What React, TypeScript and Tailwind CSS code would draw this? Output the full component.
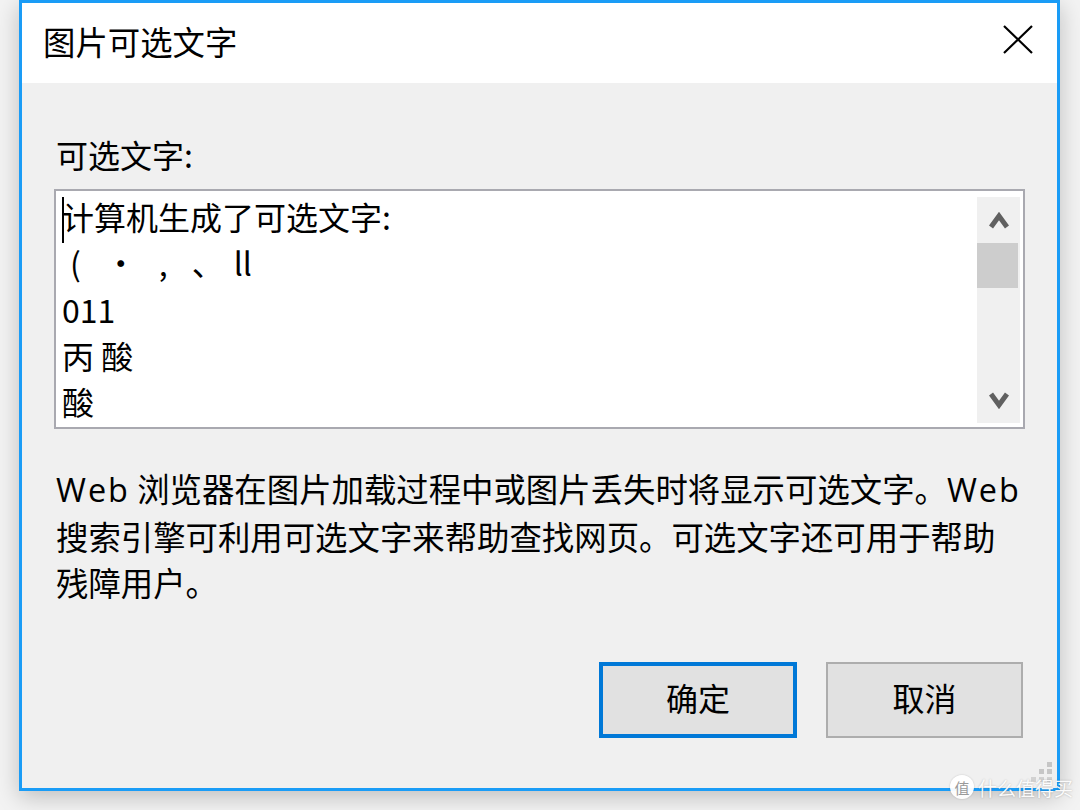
import React from "react";

const cjk = { fontFamily: '"Noto Sans CJK SC", "Noto Sans", sans-serif' };

const Chevron = ({ down }: { down?: boolean }) => (
  <svg width="20" height="17" viewBox="0 0 20 17" className={down ? "rotate-180" : ""}>
    <path d="M2 15 L10 4 L18 15" fill="none" stroke="#606060" strokeWidth="5" strokeLinejoin="miter" />
  </svg>
);

// latin words in the help text are wider in the original font
const Web = () => (
  <span className="tracking-[2px]" style={{ fontFamily: '"Open Sans", "Noto Sans CJK SC", sans-serif' }}>
    Web
  </span>
);

const AltTextDialog: React.FC = () => {
  return (
    <div
      className="relative w-[1080px] h-[810px] overflow-hidden bg-[#f3f3f3] pl-[19px] text-black"
      style={cjk}
    >
      <div className="w-[1041px] h-[791px] border-[3px] border-[#1a9cf6] bg-[#f0f0f0] shadow-[0_6px_22px_rgba(0,0,0,0.22)] flex flex-col">
        {/* title bar */}
        <div className="h-[80px] bg-white flex items-center justify-between pl-[21px] pr-[24px]">
          <span className="text-[32.4px] leading-[46px] -mt-[4px]">图片可选文字</span>
          <svg width="30" height="29" viewBox="0 0 30 29" className="-mt-[7px]">
            <path d="M1 1 L29 28 M29 1 L1 28" stroke="#000" strokeWidth="2.2" />
          </svg>
        </div>

        {/* body */}
        <div className="flex-1 px-[32px] pt-[48px]">
          <div className="text-[32px] leading-[46px] pl-[2px]">可选文字:</div>

          <div className="mt-[12px] h-[240px] border-2 border-[#a9a9b0] bg-white flex">
            <div className="relative flex-1 pl-[6px] pt-[2px] text-[32px] leading-[46.3px] whitespace-pre">
              <span className="absolute left-[6px] top-[6px] w-[2px] h-[46px] bg-black" />
              <div>计算机生成了可选文字:</div>
              <div>
                <span className="ml-[8px]">(</span>
                <span className="ml-[24px]">·</span>
                <span className="ml-[22px]">,</span>
                <span className="ml-[24px]">、</span>
                <span className="ml-[10px]">ll</span>
              </div>
              <div>011</div>
              <div>丙 酸</div>
              <div>酸</div>
            </div>
            <div className="w-[43px] mt-[6px] mb-[4px] mr-[3px] bg-[#f0f0f0] flex flex-col">
              <div className="h-[46px] flex items-center justify-center">
                <Chevron />
              </div>
              <div className="h-[45px] w-[41px] bg-[#cdcdcd]" />
              <div className="flex-1" />
              <div className="h-[46px] flex items-center justify-center">
                <Chevron down />
              </div>
            </div>
          </div>

          <div className="mt-[36px] pl-[2px] text-[32.4px] leading-[46.5px] whitespace-nowrap">
            <div>
              <Web /> 浏览器在图片加载过程中或图片丢失时将显示可选文字。<Web />
            </div>
            <div>搜索引擎可利用可选文字来帮助查找网页。可选文字还可用于帮助</div>
            <div>残障用户。</div>
          </div>

          <div className="mt-[56px] flex justify-end gap-[29px] pr-[2px]">
            <button className="w-[198px] h-[76px] pb-[6px] border-4 border-[#0078d7] bg-[#e1e1e1] text-[32px] leading-none">
              确定
            </button>
            <button className="w-[197px] h-[76px] pb-[6px] border-2 border-[#adadad] bg-[#e1e1e1] text-[32px] leading-none">
              取消
            </button>
          </div>
        </div>
      </div>

      {/* watermark */}
      <div className="absolute left-[1047px] top-[762px] w-[5px] h-[5px] bg-[#c6c6c6]" />
      <div className="absolute left-[1039px] top-[769px] w-[5px] h-[5px] bg-[#c6c6c6]" />
      <div className="absolute left-[1047px] top-[769px] w-[5px] h-[5px] bg-[#c6c6c6]" />
      <div className="absolute left-[1031px] top-[777px] w-[5px] h-[5px] bg-[#d2d2d2]" />
      <div className="absolute left-[1039px] top-[777px] w-[5px] h-[5px] bg-[#d2d2d2]" />
      <div className="absolute left-[1047px] top-[777px] w-[5px] h-[5px] bg-[#d2d2d2]" />
      <div className="absolute left-[950px] top-[775px] flex items-center gap-[4px] whitespace-nowrap">
        <div className="w-[24px] h-[24px] rounded-full bg-white/95 flex items-center justify-center text-[15px] leading-none text-[#9a9a9a] shadow-[0_0_2px_rgba(0,0,0,0.2)]">
          值
        </div>
        <span className="text-[19px] leading-none text-white/95 [text-shadow:0_0_2px_rgba(0,0,0,0.25)]">
          什么值得买
        </span>
      </div>
    </div>
  );
};

export default function App() {
  return <AltTextDialog />;
}
